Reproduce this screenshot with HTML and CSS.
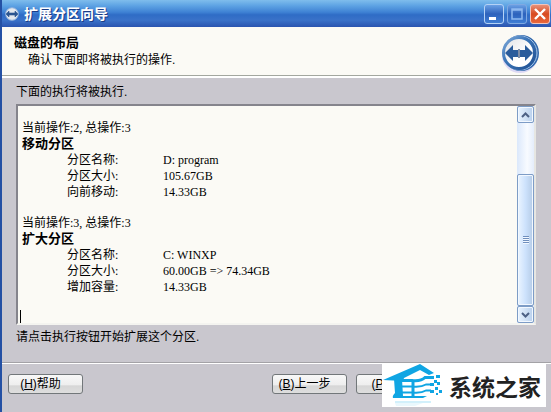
FILE: index.html
```
<!DOCTYPE html>
<html lang="zh-CN">
<head>
  <meta charset="UTF-8" />
  <title>扩展分区向导</title>
  <link rel="stylesheet" href="styles.css">
</head>
<body>
  <div class="window">
    <!-- title bar -->
    <header class="titlebar">
      <svg class="app-icon" viewBox="0 0 14 14" aria-hidden="true">
        <circle cx="7" cy="7" r="6.300" fill="#e4e8ee" stroke="#8fb0dc"/>
        <path d="M1 7l3-3v2h6V4l3 3-3 3V8H4v2z" fill="#2b5590" stroke="#2b5590" stroke-width=".6"/>
      </svg>
      <h1>扩展分区向导</h1>
      <div class="controls">
        <button class="ctl" aria-label="最小化">
          <svg viewBox="0 0 18 18"><path d="M4 12h7v3H4z" fill="#fff"/></svg>
        </button>
        <button class="ctl dim" aria-label="最大化" disabled>
          <svg viewBox="0 0 18 18"><path d="M4 5h10M4 4v10h10V4z" fill="none" stroke="#8fb9f0" stroke-width="1.5"/></svg>
        </button>
        <button class="ctl close" aria-label="关闭">
          <svg viewBox="0 0 18 18"><path d="M4 4l10 10M14 4L4 14" stroke="#fff" stroke-width="2.4"/></svg>
        </button>
      </div>
    </header>

    <section class="banner">
      <div class="banner-text">
        <h2>磁盘的布局</h2>
        <p>确认下面即将被执行的操作.</p>
      </div>
      <svg class="logo" viewBox="0 0 40 40" aria-hidden="true">
        <defs>
          <linearGradient id="ring" x1="0" y1="0" x2="1" y2="1">
            <stop offset="0" stop-color="#7fa9d8"/>
            <stop offset="0.4" stop-color="#3c76b8"/>
            <stop offset="1" stop-color="#1f4f92"/>
          </linearGradient>
          <linearGradient id="disc" x1="0" y1="0" x2="1" y2="1">
            <stop offset="0" stop-color="#dfe0e4"/>
            <stop offset="0.6" stop-color="#ffffff"/>
          </linearGradient>
        </defs>
        <ellipse cx="19" cy="22" rx="18" ry="17" fill="#dcd8f4"/>
        <circle cx="20" cy="19" r="18" fill="#2f66aa"/>
        <circle cx="19" cy="19" r="17" fill="none" stroke="#a9c8ea"/>
        <circle cx="18" cy="19" r="15.500" fill="url(#disc)" stroke="url(#ring)" stroke-width="3"/>
        <path d="M4 19l8-8v5h5v7h-5v4z" fill="#2a5c9c"/>
        <path d="M32 19l-8-8v5h-5v7h5v4z" fill="#2a5c9c"/>
        <path d="M18 15v9" stroke="#7d8ca6" stroke-width="2"/>
      </svg>
    </section>

    <main class="content">
      <p class="label">下面的执行将被执行.</p>
      <div class="log-box">
        <div class="log" tabindex="0">
          <p>当前操作:2, 总操作:3</p>
          <h3>移动分区</h3>
          <table>
            <tr><th>分区名称:</th><td>D: program</td></tr>
            <tr><th>分区大小:</th><td>105.67GB</td></tr>
            <tr><th>向前移动:</th><td>14.33GB</td></tr>
          </table>
          <p>当前操作:3, 总操作:3</p>
          <h3>扩大分区</h3>
          <table>
            <tr><th>分区名称:</th><td>C: WINXP</td></tr>
            <tr><th>分区大小:</th><td>60.00GB =&gt; 74.34GB</td></tr>
            <tr><th>增加容量:</th><td>14.33GB</td></tr>
          </table>
          <div class="caret"></div>
        </div>
        <div class="scrollbar">
          <button class="sb-btn" aria-label="向上">
            <svg viewBox="0 0 9 6"><path d="M1 5l3.500-3.500L8 5" fill="none" stroke="#4d6185" stroke-width="2"/></svg>
          </button>
          <div class="track"><div class="thumb"><i></i></div></div>
          <button class="sb-btn" aria-label="向下">
            <svg viewBox="0 0 9 6"><path d="M1 1l3.500 3.500L8 1" fill="none" stroke="#4d6185" stroke-width="2"/></svg>
          </button>
        </div>
      </div>
      <p class="label">请点击执行按钮开始扩展这个分区.</p>
    </main>

    <footer class="actions">
      <button class="btn help">(<u>H</u>)帮助</button>
      <button class="btn">(<u>B</u>)上一步</button>
      <button class="btn next">(<u>P</u>)执行</button>
      <div class="btn-space"></div>
    </footer>

    <div class="brand">
      <svg viewBox="0 0 62 43" aria-hidden="true">
        <!-- roof, wall and floor -->
        <path d="M1 16L38 0l14 9-5 2-9-5-16 8-1 3z" fill="#10a5e3"/>
        <path d="M12 15h8l1 17h24l-4 2H11q-1-2 2-5z" fill="#10a5e3"/>
        <!-- window bars running out into waves -->
        <g fill="none" stroke="#10a5e3">
          <path d="M19 16.500h11q9 1 13-3h5" stroke-width="3"/>
          <path d="M19 22.500h11q9 1 14-2h5" stroke-width="2"/>
          <path d="M19 28.500h11q9 1 14-2h5" stroke-width="2"/>
          <path d="M31 16v17" stroke-width="3"/>
        </g>
        <path d="M48 12h4v3h-4zM54 11h4v3h-4zM52 16h3v3h-3zM48 19h4v3h-4zM55 18h3v3h-3zM53 23h3v3h-3zM57 26h3v3h-3zM48 26h4v3h-4zM54 29h2v2h-2z" fill="#10a5e3"/>
        <!-- reflection -->
        <path d="M13 37h36v2H13z" fill="#d2f0fb"/>
        <path d="M13 39h28l-8 3H14z" fill="#eaf8fd"/>
      </svg>
      <span>系统之家</span>
    </div>
  </div>
</body>
</html>
```

FILE: styles.css
```
* {
  box-sizing: border-box;
  margin: 0;
  padding: 0;
}

body {
  font-family: 'Liberation Sans', 'Noto Sans CJK SC', sans-serif;
  font-size: 12px;
  line-height: 16px;
  color: #000;
  background: #c9c7ce;
}

.window {
  position: relative;
  min-height: 100vh;
  display: flex;
  flex-direction: column;
  border-left: 2px solid #2450a4;
}

/* title bar */
.titlebar {
  height: 27px;
  display: flex;
  align-items: center;
  padding: 0 1px 0 3px;
  background: linear-gradient(#7fbdec 0, #5fa4e4 20%, #3f82d4 45%, #2f6cc6 55%, #3a72c8 75%, #2a54b0 100%);
}

.app-icon {
  width: 14px;
  height: 14px;
}

h1 {
  flex: 1;
  margin-left: 5px;
  font-size: 14px;
  line-height: 20px;
  color: #fff;
  text-shadow: 1px 1px 0 #1a3c86;
}

.controls {
  display: flex;
  gap: 3px;
}

.ctl {
  width: 20px;
  height: 20px;
  border: 1px solid #b4d2f6;
  border-radius: 3px;
  background: linear-gradient(#6ba0e4, #2d62bc 50%, #3f7ed4);
}

.ctl svg {
  display: block;
}

.ctl.dim {
  border-color: #7fa9e2;
}

.ctl.close {
  border-color: #f0c4bc;
  background: linear-gradient(#e89078, #d84a20 50%, #e8683c);
}

/* banner */
.banner {
  display: flex;
  justify-content: space-between;
  padding: 7px 10px 0 12px;
  height: 51px;
  background: #fbfaf5;
  border-bottom: 2px solid #fff;
  box-shadow: inset 0 -1px 0 #a3a79f;
}

h2 {
  font-size: 13px;
  line-height: 18px;
}

.banner-text p {
  padding-left: 14px;
}

.logo {
  width: 40px;
  height: 40px;
}

/* content */
.content {
  flex: 1;
  display: flex;
  flex-direction: column;
  padding: 6px 15px 0 14px;
}

.log-box {
  flex: 1;
  display: flex;
  margin: 4px 0;
  background: #fbfaf5;
  border: 2px solid #85848c;
  border-right-color: #e6e6e2;
  border-bottom-color: #f4f4f0;
}

.log {
  flex: 1;
  display: flex;
  flex-direction: column;
  padding: 14px 0 0 4px;
  font-family: 'Liberation Serif', 'Noto Sans CJK SC', serif;
  outline: none;
}

h3 {
  font-size: 13px;
  line-height: 16px;
}

.log table {
  margin: 0 0 15px 45px;
  border-collapse: collapse;
}

.log th {
  width: 96px;
  font-weight: normal;
  text-align: left;
}

.caret {
  width: 1px;
  height: 13px;
  margin: auto 0 0 -2px;
  background: #000;
}

.scrollbar {
  width: 17px;
  display: flex;
  flex-direction: column;
  background: linear-gradient(90deg, #dbe8fb, #f8fbff 60%, #e4edfb);
}

.sb-btn {
  height: 17px;
  display: flex;
  align-items: center;
  justify-content: center;
  border: 1px solid #7d9cc6;
  border-radius: 2px;
  background: linear-gradient(90deg, #e8f3ff, #b9d0ec);
  box-shadow: inset 0 0 0 1px #f2f8ff;
}

.sb-btn svg {
  width: 9px;
  height: 6px;
}

.track {
  flex: 1;
  display: flex;
  align-items: flex-end;
}

.thumb {
  width: 100%;
  height: 72%;
  display: flex;
  align-items: center;
  justify-content: center;
  border: 1px solid #7d9cc6;
  border-radius: 2px;
  background: linear-gradient(90deg, #eaf4ff, #cde2fc 50%, #b4cbe6);
  box-shadow: inset 0 0 0 1px #f2f8ff;
}

.thumb i {
  width: 6px;
  height: 8px;
  background: repeating-linear-gradient(#6f8fbd 0 1px, #f2f8ff 1px 2px);
}

/* bottom buttons */
.actions {
  display: flex;
  gap: 9px;
  margin-top: 17px;
  padding: 11px 18px 18px 6px;
  border-top: 1px solid #a3a2a6;
  box-shadow: inset 0 1px 0 #fff;
}

.btn {
  width: 75px;
  height: 20px;
  padding-right: 10px;
  font: inherit;
  border: 1px solid #72777a;
  border-radius: 3px;
  background: linear-gradient(#f8f8f8, #eeeeee 55%, #d6d6d6 60%, #dedede);
}

.help {
  margin-right: auto;
}

.next {
  padding-right: 4px;
}

.btn-space {
  width: 93px;
}

/* site badge laid over the corner */
.brand {
  position: absolute;
  right: 5px;
  bottom: 5px;
  width: 164px;
  height: 43px;
  display: flex;
  align-items: center;
  gap: 5px;
  background: #fff;
  color: #222;
  font-family: 'Noto Sans CJK SC', sans-serif;
  font-size: 23px;
  font-weight: bold;
  line-height: 32px;
  white-space: nowrap;
}

.brand svg {
  width: 62px;
  height: 43px;
}
```
